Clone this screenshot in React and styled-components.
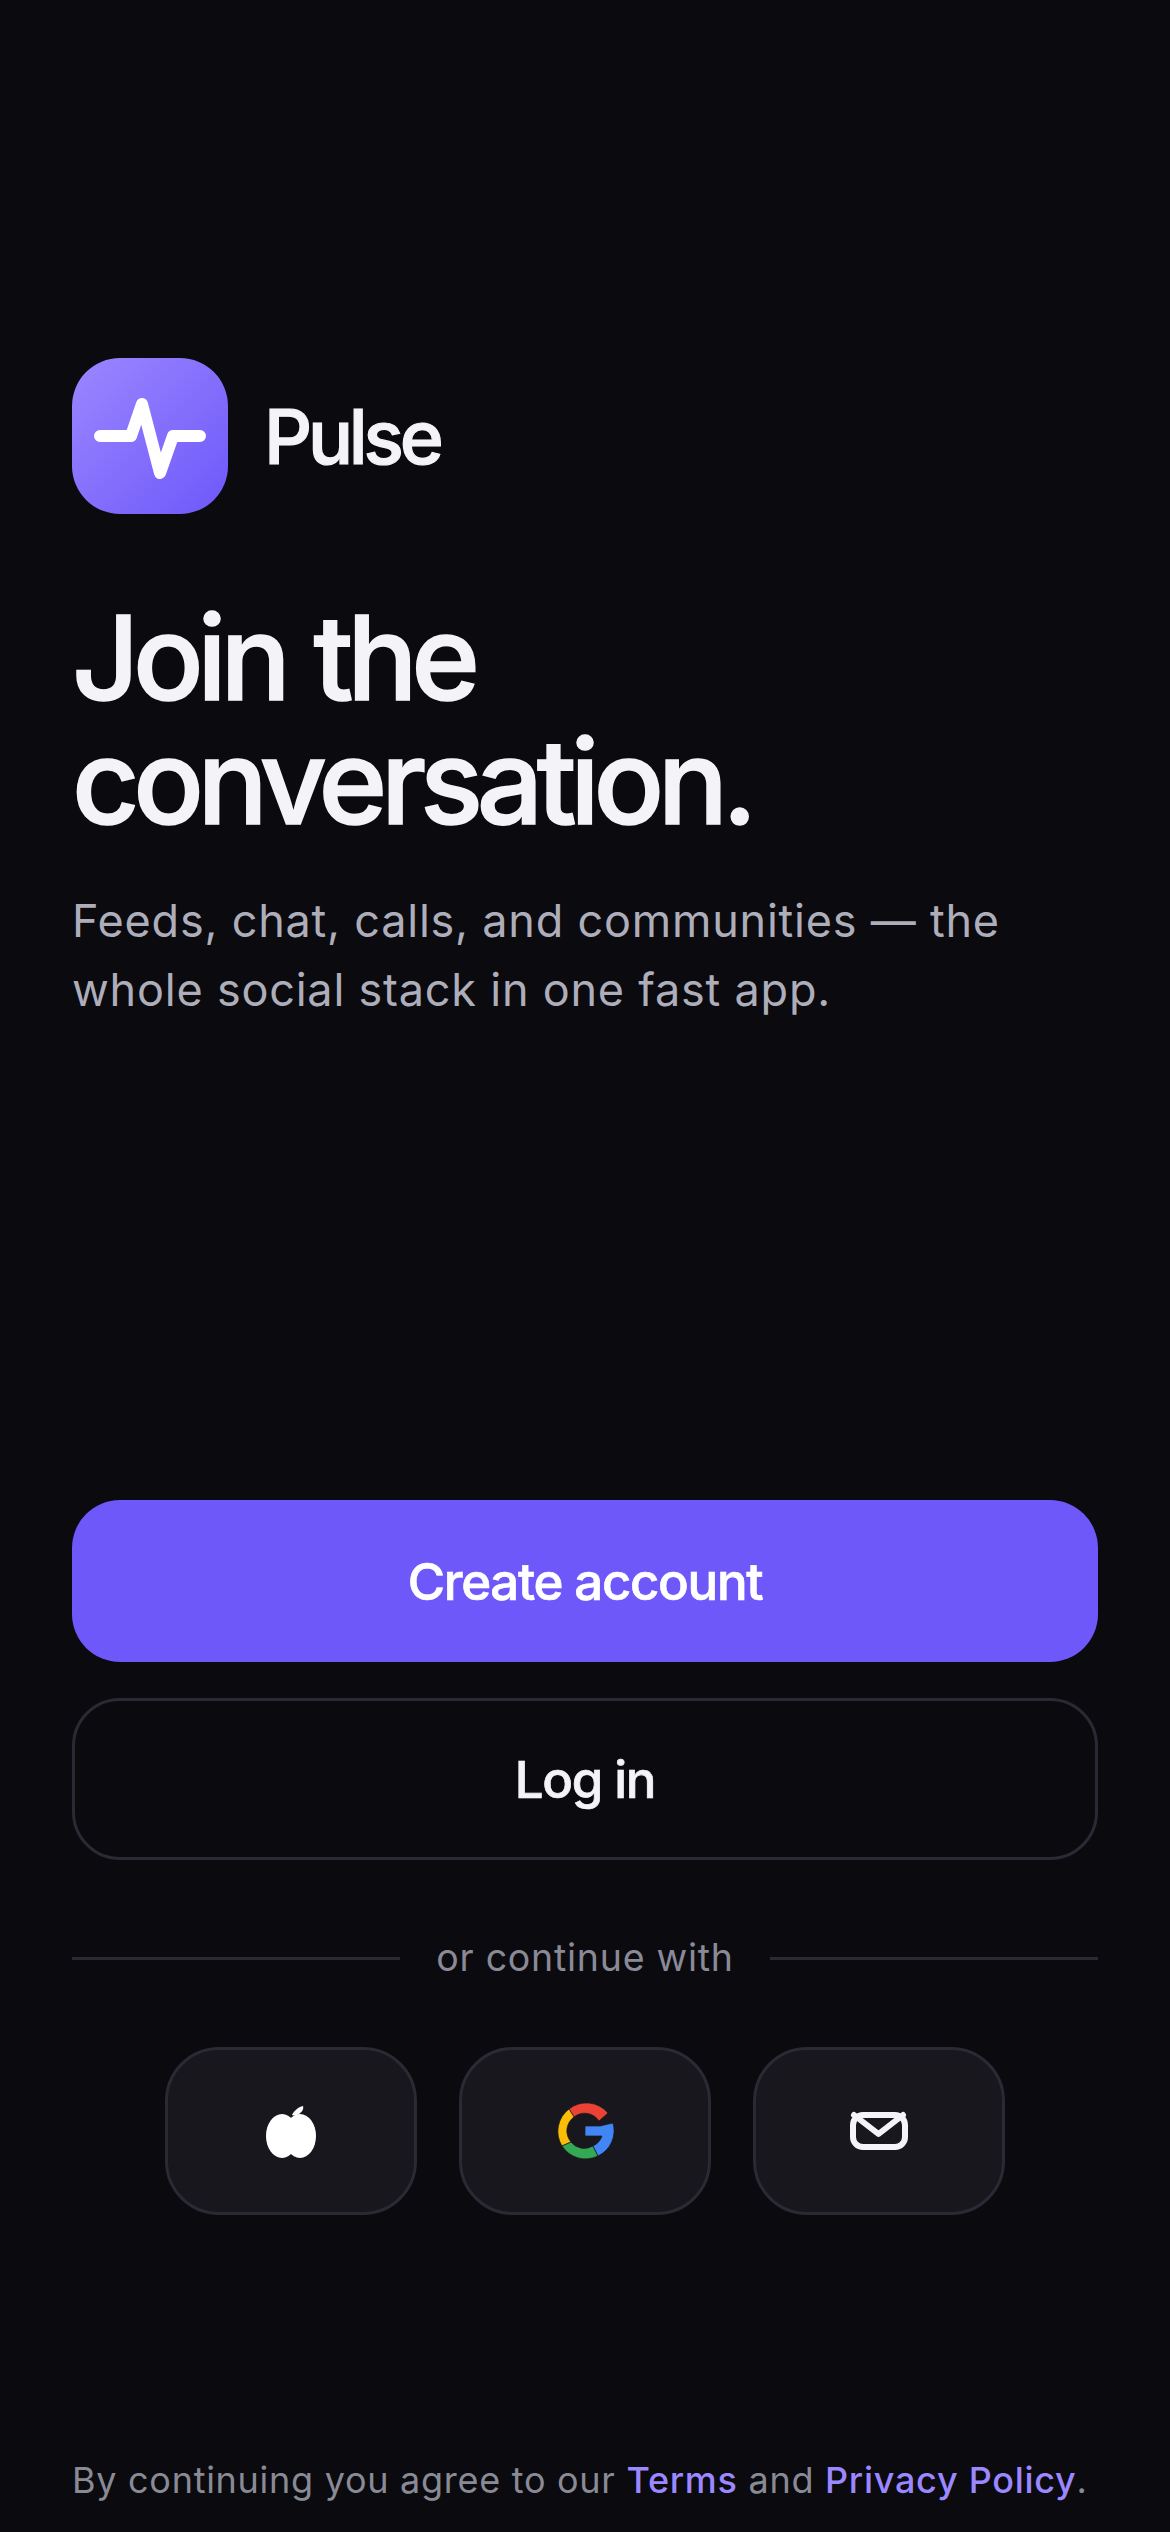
import React from 'react';
import styled, { createGlobalStyle } from 'styled-components';

const GlobalStyle = createGlobalStyle`
  html, body {
    margin: 0;
    padding: 0;
    background: #0a0a0f;
  }
`;

const Screen = styled.main`
  box-sizing: border-box;
  width: 1170px;
  height: 2532px;
  padding: 358px 72px 0;
  display: flex;
  flex-direction: column;
  background: #0a0a0f;
  font-family: Inter, "Liberation Sans", sans-serif;
  overflow: hidden;
`;

const Brand = styled.div`
  display: flex;
  align-items: center;
  gap: 36px;
`;

const LogoTile = styled.div`
  width: 156px;
  height: 156px;
  border-radius: 48px;
  display: flex;
  align-items: center;
  justify-content: center;
  background: linear-gradient(135deg, #9b87ff, #6e58fa);
`;

const BrandName = styled.span`
  font-size: 75px;
  font-weight: 500;
  letter-spacing: -4.2px;
  -webkit-text-stroke: 1.2px #f4f4f8;
  color: #f4f4f8;
`;

const Heading = styled.h1`
  margin: 82px 0 0;
  font-size: 117px;
  line-height: 124px;
  font-weight: 500;
  letter-spacing: -6.3px;
  word-spacing: 4px;
  -webkit-text-stroke: 1.6px #f4f4f8;
  color: #f4f4f8;
`;

const Lede = styled.p`
  margin: 42px 0 0;
  font-size: 45px;
  line-height: 69px;
  letter-spacing: 0.78px;
  color: #aeaebb;
`;

const Actions = styled.div`
  margin-top: auto;
  display: flex;
  flex-direction: column;
  gap: 36px;
`;

const Button = styled.button`
  height: 162px;
  width: 100%;
  border-radius: 48px;
  font-family: inherit;
  font-size: 51px;
  font-weight: 500;
  letter-spacing: -1.35px;
  -webkit-text-stroke: 0.7px currentColor;
  color: ${(p) => (p.$primary ? '#ffffff' : '#f4f4f8')};
  background: ${(p) => (p.$primary ? '#6e58fa' : 'transparent')};
  border: ${(p) => (p.$primary ? 'none' : '3px solid #2a2a35')};
`;

const Divider = styled.div`
  margin-top: 68px;
  display: flex;
  align-items: center;
  gap: 36px;
  font-size: 37.5px;
  line-height: 60px;
  letter-spacing: 0.75px;
  color: #8a8a97;

  &::before,
  &::after {
    content: '';
    flex: 1;
    height: 3px;
    background: #2a2a35;
  }
`;

const SocialRow = styled.div`
  margin-top: 59px;
  display: flex;
  justify-content: center;
  gap: 42px;
`;

const SocialButton = styled.button`
  width: 252px;
  height: 168px;
  padding: 0;
  border-radius: 54px;
  border: 3px solid #2a2a35;
  background: #17171d;
  display: flex;
  align-items: center;
  justify-content: center;
`;

const Legal = styled.p`
  margin: 238px 0 25px;
  font-size: 36px;
  line-height: 54px;
  letter-spacing: 0.72px;
  white-space: nowrap;
  color: #8a8a97;
`;

const LegalLink = styled.a`
  color: #9b87ff;
  font-weight: 500;
`;

const PulseIcon = () => (
  <svg width="114" height="90" viewBox="0 0 114 90" fill="none" stroke="#fff" strokeWidth="12" strokeLinecap="round" strokeLinejoin="round">
    <path d="M7 45H38L49 13L67 82L80 45H107" />
  </svg>
);

const AppleIcon = () => (
  <svg width="60" height="60" viewBox="0 0 60 60" fill="#fff">
    <ellipse cx="21" cy="35" rx="16" ry="22" />
    <ellipse cx="39" cy="35" rx="16" ry="22" />
    <path d="M31 14C33 10 37 6 42 5C43 8 41 11 38 13C36 14.5 33 15 31 14Z" />
  </svg>
);

const GoogleIcon = () => (
  <svg width="60" height="60" viewBox="0 0 60 60" stroke="#17171d" strokeWidth="0.7">
    <path fill="#EA4335" d="M14 8A28 28 0 0 1 53 12L44 20A17 17 0 0 0 19 16Z" />
    <path fill="#FBBC05" d="M14 8A28 28 0 0 0 7 45L16 41A17 17 0 0 1 19 16Z" />
    <path fill="#34A853" d="M7 45A28 28 0 0 0 43 55L38 45A17 17 0 0 1 16 41Z" />
    <path fill="#4285F4" d="M30 25H45L58 22A28 28 0 0 1 43 55L38 45A17 17 0 0 0 47 35H30Z" />
  </svg>
);

const MailIcon = () => (
  <svg width="60" height="44" viewBox="0 0 60 44" fill="none" stroke="#f4f4f8" strokeWidth="6" strokeLinecap="round" strokeLinejoin="round">
    <rect x="4" y="6" width="52" height="32" rx="10" />
    <path d="M5 6L29.5 25L54 6" />
  </svg>
);

export default function App() {
  return (
    <Screen>
      <GlobalStyle />
      <Brand>
        <LogoTile>
          <PulseIcon />
        </LogoTile>
        <BrandName>Pulse</BrandName>
      </Brand>
      <Heading>
        Join the
        <br />
        conversation.
      </Heading>
      <Lede>
        Feeds, chat, calls, and communities — the
        <br />
        whole social stack in one fast app.
      </Lede>
      <Actions>
        <Button $primary>Create account</Button>
        <Button>Log in</Button>
      </Actions>
      <Divider>or continue with</Divider>
      <SocialRow>
        <SocialButton aria-label="Apple">
          <AppleIcon />
        </SocialButton>
        <SocialButton aria-label="Google">
          <GoogleIcon />
        </SocialButton>
        <SocialButton aria-label="Email">
          <MailIcon />
        </SocialButton>
      </SocialRow>
      <Legal>
        By continuing you agree to our <LegalLink>Terms</LegalLink> and <LegalLink>Privacy Policy</LegalLink>.
      </Legal>
    </Screen>
  );
}
